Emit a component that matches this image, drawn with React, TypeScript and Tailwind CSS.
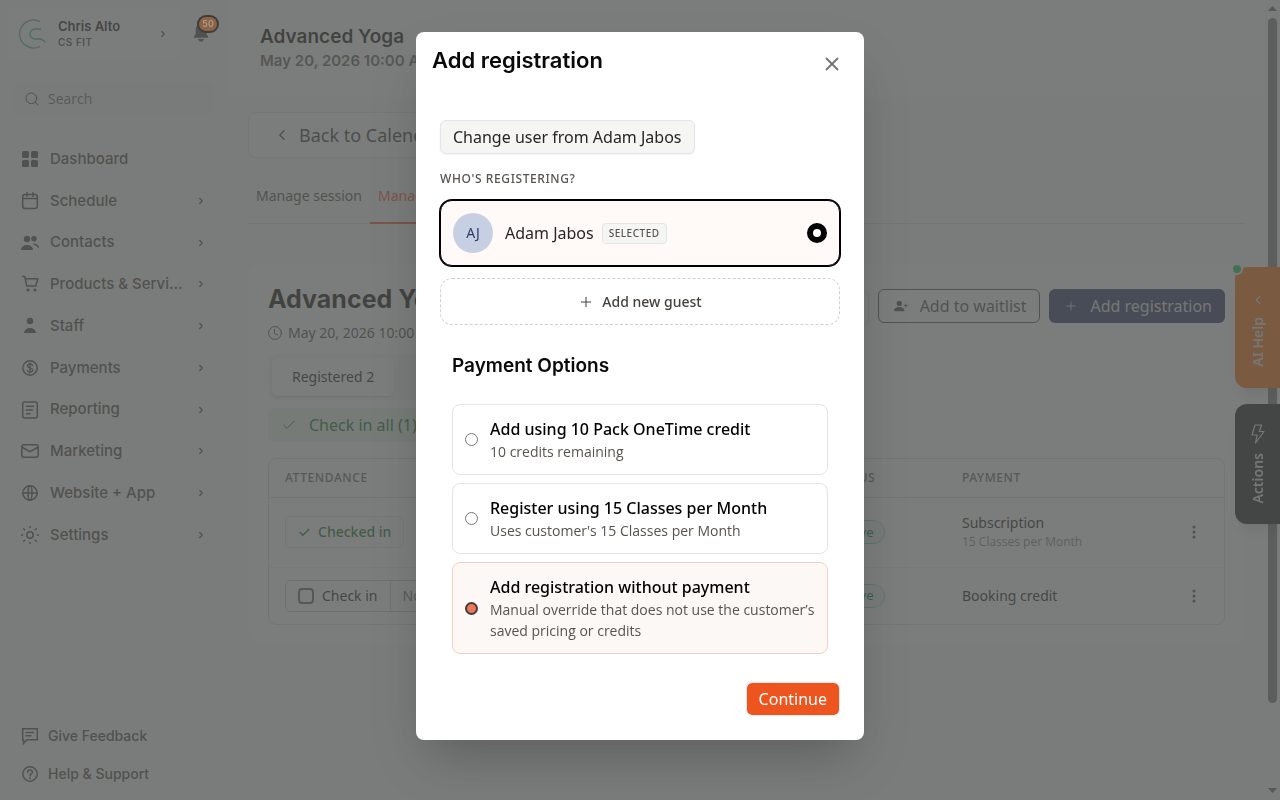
import React, { useState } from 'react';
import { Check, ChevronLeft, ChevronRight, Plus, Search, X } from 'lucide-react';
import { BsPersonPlusFill, BsThreeDotsVertical } from 'react-icons/bs';

const NAV_ICONS: Record<string, React.ReactNode> = {
  dashboard: (
    <g fill="currentColor" stroke="none">
      <rect x="1" y="1" width="7" height="7" rx="1.5" />
      <rect x="10" y="1" width="7" height="7" rx="1.5" />
      <rect x="1" y="10" width="7" height="7" rx="1.5" />
      <rect x="10" y="10" width="7" height="7" rx="1.5" />
    </g>
  ),
  schedule: (
    <>
      <rect x="1.7" y="2.5" width="14.6" height="14" rx="2.5" />
      <path d="M2 6.5h14M6 .8v3.4M12 .8v3.4" />
    </>
  ),
  contacts: (
    <>
      <g fill="currentColor" stroke="none">
        <circle cx="6" cy="5" r="3.2" />
        <circle cx="13" cy="4.8" r="2.7" />
        <path d="M0 16c0-3 2.600-5 6-5s6 2 6 5z" />
      </g>
      <path d="M13.200 10.300c2 .5 3.400 1.400 4.300 2.800" />
    </>
  ),
  products: (
    <>
      <path d="M1.500 1.500h2.300l2 9.500h9L16.700 3.700H4.500" />
      <circle cx="7" cy="15" r="1.600" fill="currentColor" stroke="none" />
      <circle cx="14" cy="15" r="1.600" fill="currentColor" stroke="none" />
    </>
  ),
  staff: (
    <g fill="currentColor" stroke="none">
      <circle cx="9" cy="4" r="3.200" />
      <path d="M3 16c.3-3 2.600-5 6-5s5.700 2 6 5z" />
    </g>
  ),
  payments: (
    <>
      <circle cx="9" cy="9" r="7.200" />
      <path d="M11.500 6.500c-.4-1-1.300-1.500-2.500-1.500-1.500 0-2.500.8-2.500 2 0 2.700 5.200 1.400 5.200 4 0 1.200-1.100 2-2.700 2-1.400 0-2.400-.6-2.700-1.700M9 3.800v10.400" strokeWidth="1.300" />
    </>
  ),
  reporting: (
    <>
      <rect x="1.700" y="1" width="14.600" height="16" rx="2" />
      <path d="M5.500 5.200h7M5.500 9h6M5.500 12.800h3.500" />
    </>
  ),
  marketing: (
    <>
      <rect x=".8" y="2.800" width="16.400" height="12.400" rx="2.200" />
      <path d="M1.500 5.500L9 9.700l7.500-4.200" />
    </>
  ),
  website: (
    <>
      <circle cx="9" cy="9" r="7.200" />
      <ellipse cx="9" cy="9" rx="2" ry="7.200" />
      <path d="M1.800 9h14.400" />
    </>
  ),
  settings: (
    <>
      <circle cx="9" cy="9" r="3.200" />
      <path d="M9 0v1.500M9 16.500v1.500M0 9h1.500M16.500 9h1.500M2.700 2.700l1 1M14.300 14.300l1 1M2.700 15.300l1-1M14.300 3.700l1-1" />
    </>
  ),
  feedback: (
    <path d="M1.700 1.700h14.600v11H6L2.500 16.500v-3.800h-.8zM5 5.500h7.500M5 8.800h5" strokeLinejoin="miter" />
  ),
  help: (
    <>
      <circle cx="9" cy="9" r="7.200" />
      <path d="M6.700 7.300c0-1.300 1-2.200 2.300-2.200s2.300.9 2.300 2.100c0 1.600-2.300 1.800-2.300 3.600" />
      <circle cx="9" cy="13" r=".9" fill="currentColor" stroke="none" />
    </>
  ),
};

const NavIcon = ({ name }: { name: string }) => (
  <svg width="18" height="18" viewBox="0 0 18 18" fill="none" stroke="currentColor" strokeWidth="1.500" strokeLinecap="round" strokeLinejoin="round" className="shrink-0" aria-hidden="true">
    {NAV_ICONS[name]}
  </svg>
);

const NAV_ITEMS = [
  { icon: 'dashboard', label: 'Dashboard' },
  { icon: 'schedule', label: 'Schedule', children: true },
  { icon: 'contacts', label: 'Contacts', children: true },
  { icon: 'products', label: 'Products & Servi…', children: true },
  { icon: 'staff', label: 'Staff', children: true },
  { icon: 'payments', label: 'Payments', children: true },
  { icon: 'reporting', label: 'Reporting', children: true },
  { icon: 'marketing', label: 'Marketing', children: true },
  { icon: 'website', label: 'Website + App', children: true },
  { icon: 'settings', label: 'Settings', children: true },
];

const PAYMENT_OPTIONS = [
  { id: 'pack', title: 'Add using 10 Pack OneTime credit', detail: '10 credits remaining' },
  { id: 'subscription', title: 'Register using 15 Classes per Month', detail: "Uses customer's 15 Classes per Month" },
  { id: 'none', title: 'Add registration without payment', detail: 'Manual override that does not use the customer’s saved pricing or credits' },
];

const Sidebar = () => (
  <aside className="w-[228px] shrink-0 flex flex-col bg-[#fbfbfb] text-[#57504d] font-['Inter',sans-serif]">
    <div className="flex items-start pl-2 pt-2">
      <button className="flex items-center w-[172px] h-[52px] pl-[11px] pr-3 rounded-lg bg-white text-left">
        <svg width="28" height="30" viewBox="0 0 28 30" fill="none" stroke="#4fb5a8" strokeWidth="1.300" aria-hidden="true">
          <path d="M21 2.500A14 14 0 1 0 21 27.500" />
          <path d="M22 10h-6a5 5 0 0 0 0 10h6l4.500 3" />
        </svg>
        <span className="flex-1 ml-[11px]">
          <span className="block text-[13px] leading-4 font-semibold text-[#292524]">Chris Alto</span>
          <span className="block text-[10px] leading-4 font-semibold tracking-wider">CS FIT</span>
        </span>
        <ChevronRight size={10} strokeWidth={3} />
      </button>
      <button className="relative ml-[13px] mt-[15px]" aria-label="Notifications">
        <svg width="16" height="20" viewBox="0 0 16 20" fill="currentColor" aria-hidden="true">
          <path d="M8 1C4.500 1 2.700 3.500 2.700 6.500v4.300L1 13.500v1.200h14v-1.200l-1.700-2.700V6.500C13.300 3.500 11.500 1 8 1z" />
          <path d="M5 16h6c-.4 1.700-1.500 2.600-3 2.600S5.400 17.700 5 16z" />
        </svg>
        <span className="absolute z-30 left-1 -top-2 flex items-center justify-center w-[22px] h-[18px] rounded-full border-2 border-[#3c3e3d] bg-[#8e6243] text-[9px] font-medium text-[#a9a5a2]">50</span>
      </button>
    </div>

    <label className="flex items-center gap-2 mt-[22px] mx-[14px] h-[34px] px-[10px] rounded-lg bg-[#f6f6f6]">
      <Search size={16} strokeWidth={1.5} className="shrink-0" />
      <input type="text" placeholder="Search" aria-label="Search" className="w-full bg-transparent font-['Open_Sans',sans-serif] text-sm outline-none placeholder:text-[#78716c]" />
    </label>

    <nav className="flex flex-col justify-between h-[412px] mt-[25px] pl-[21px] pr-[22px]">
      {NAV_ITEMS.map((item) => (
        <a key={item.icon} href="#" className="flex items-center h-9 gap-[11px] text-[15px] font-medium whitespace-nowrap">
          <NavIcon name={item.icon} />
          <span className="flex-1">{item.label}</span>
          {item.children && <ChevronRight size={10} strokeWidth={3} />}
        </a>
      ))}
    </nav>

    <div className="mt-auto pl-[21px] pb-[7px]">
      <a href="#" className="flex items-center h-[38px] gap-[9px] text-sm font-medium">
        <NavIcon name="feedback" />
        Give Feedback
      </a>
      <a href="#" className="flex items-center h-[38px] gap-[9px] text-sm font-medium">
        <NavIcon name="help" />
        Help &amp; Support
      </a>
    </div>
  </aside>
);

const StatusPill = () => (
  <span className="inline-flex items-center h-6 px-[10px] rounded-full border border-[#8fd6bf] bg-[#effaf6] text-[13px] text-[#0f766e]">Active</span>
);

const AttendanceTable = () => (
  <div className="mt-4 rounded-lg border border-[#dddddd]">
    <table className="w-full table-fixed text-left text-sm">
      <colgroup>
        <col className="w-[260px]" />
        <col />
        <col className="w-[136px]" />
        <col className="w-[220px]" />
        <col className="w-[58px]" />
      </colgroup>
      <thead>
        <tr className="h-[38px] border-b border-[#dddddd] text-xs text-[#6b6b6b] tracking-wider">
          <th className="px-4 font-medium">ATTENDANCE</th>
          <th />
          <th className="px-5 font-medium">STATUS</th>
          <th className="px-4 font-medium">PAYMENT</th>
          <th />
        </tr>
      </thead>
      <tbody>
        <tr className="h-[70px] border-b border-[#eeeeee]">
          <td className="px-4">
            <button className="flex items-center gap-[7px] h-8 px-3 rounded-md border border-[#d4e2d8] text-[#1f7a33] font-medium">
              <Check size={13} strokeWidth={2.5} />
              Checked in
            </button>
          </td>
          <td />
          <td className="px-4"><StatusPill /></td>
          <td className="px-4">
            <div className="leading-5 text-[#292524]">Subscription</div>
            <div className="font-['Open_Sans',sans-serif] text-xs leading-[18px] text-[#8a8a8a]">15 Classes per Month</div>
          </td>
          <td className="px-4">
            <button className="block ml-1 text-[#57534e]" aria-label="Row menu"><BsThreeDotsVertical size={16} /></button>
          </td>
        </tr>
        <tr className="h-[57px]">
          <td className="px-4">
            <div className="inline-flex items-center h-8 rounded-md border border-[#cfcfcf]">
              <label className="flex items-center gap-2 h-full px-3 border-r border-[#cfcfcf] text-[#292524]">
                <input type="checkbox" className="appearance-none w-4 h-4 rounded border-2 border-[#6b6b6b]" />
                Check in
              </label>
              <button className="px-3 text-[#78716c]">No show</button>
            </div>
          </td>
          <td />
          <td className="px-4"><StatusPill /></td>
          <td className="px-4 text-[#292524]">Booking credit</td>
          <td className="px-4">
            <button className="block ml-1 text-[#57534e]" aria-label="Row menu"><BsThreeDotsVertical size={16} /></button>
          </td>
        </tr>
      </tbody>
    </table>
  </div>
);

const SessionPage = () => (
  <main className="flex-1 min-w-0 bg-[#f9f9f9] text-[#57534e]">
    <header className="h-[97px] px-8 pt-6 bg-white font-['Inter',sans-serif] font-semibold">
      <h1 className="text-[19px] leading-[26px] text-[#1c1917]">Advanced Yoga</h1>
      <p className="text-[15px] leading-[22px] text-[#6b6663]">May 20, 2026 10:00 AM</p>
    </header>

    <div className="px-5 pt-[15px]">
      <button className="flex items-center gap-2 h-[46px] pl-6 pr-6 rounded-lg border border-[#e7e5e4] bg-white text-lg text-[#44403c]">
        <ChevronLeft size={18} strokeWidth={1.5} />
        Back to Calendar
      </button>

      <div className="flex h-[50px] mt-4 border-b border-[#dddddd] text-sm">
        <a href="#" className="px-2 pt-3 h-[50px]">Manage session</a>
        <a href="#" className="px-2 pt-3 h-[50px] border-b-2 border-[#ff5a3c] text-[#ff5a3c]">Manage attendees</a>
      </div>

      <section className="mt-10 p-5 rounded-2xl bg-white">
        <div className="flex justify-between">
          <div>
            <h2 className="font-['Inter',sans-serif] text-[25px] leading-[30px] font-bold text-[#1c1917]">Advanced Yoga</h2>
            <p className="flex items-center gap-[6px] mt-2 text-sm leading-[22px]">
              <svg width="14" height="14" viewBox="0 0 14 14" fill="none" stroke="currentColor" strokeWidth="1" strokeLinecap="round" aria-hidden="true">
                <circle cx="7" cy="7" r="6.400" />
                <path d="M6.500 3.500v4l3 1.500" />
              </svg>
              May 20, 2026 10:00 AM
            </p>
          </div>
          <div className="flex items-start gap-[9px] pt-[5px]">
            <button className="h-[38px] px-3 rounded-lg border border-[#dddddd] text-base">Message</button>
            <button className="flex items-center gap-3 h-[34px] pl-[15px] pr-[13px] rounded-md border border-[#57534e] text-base">
              <BsPersonPlusFill size={14} />
              Add to waitlist
            </button>
            <button className="flex items-center gap-3 h-[34px] pl-[15px] pr-[13px] rounded-md bg-[#303c68] text-base text-[#e5e5e5]">
              <Plus size={14} strokeWidth={1.5} />
              Add registration
            </button>
          </div>
        </div>

        <div className="flex w-80 h-[46px] mt-[10px] p-1 rounded-lg bg-[#f5f5f5] text-sm">
          <button className="px-5 rounded-md bg-white text-[#292524] shadow-sm">Registered 2</button>
        </div>

        <button className="flex items-center gap-3 h-[34px] mt-2 pl-[13px] pr-3 rounded-md bg-[#e9f5ee] text-base text-[#1f7a33]">
          <Check size={16} strokeWidth={1.5} />
          Check in all (1)
        </button>

        <AttendanceTable />
      </section>
    </div>
  </main>
);

const ScrollRail = () => (
  <div className="w-[15px] shrink-0 flex flex-col items-center bg-[#f9f9f9] text-[#6b6b6b]" aria-hidden="true">
    <svg width="9" height="5" viewBox="0 0 9 5" fill="currentColor" className="mt-[6px]"><path d="M0 5L4.500 0 9 5z" /></svg>
    <div className="w-[9px] basis-[685px] shrink mt-[7px] rounded-full bg-[#828282]" />
    <svg width="9" height="5" viewBox="0 0 9 5" fill="currentColor" className="mt-auto mb-[7px]"><path d="M0 0l4.500 5L9 0z" /></svg>
  </div>
);

const SideTabs = () => (
  <div className="fixed right-0 top-[267px] flex flex-col gap-4 text-sm font-semibold text-[#e7e5e4]">
    <button className="relative flex flex-col items-center justify-center gap-[10px] w-[45px] h-[121px] pt-1 rounded-l-xl bg-[#f97316] shadow-lg">
      <ChevronLeft size={14} strokeWidth={2} />
      <span className="[writing-mode:vertical-rl] rotate-180">AI Help</span>
      <span className="absolute -left-1 -top-1 w-3 h-3 rounded-full border-2 border-white bg-[#22c55e]" />
    </button>
    <button className="flex flex-col items-center justify-center gap-[9px] w-[45px] h-[120px] rounded-l-xl bg-[#262626] shadow-lg">
      <svg width="14" height="20" viewBox="0 0 14 20" fill="none" stroke="currentColor" strokeWidth="1.200" strokeLinejoin="round" aria-hidden="true">
        <path d="M4 1h6.500L8.300 7.500H13L4.500 19l1.600-8H1z" />
      </svg>
      <span className="[writing-mode:vertical-rl] rotate-180">Actions</span>
    </button>
  </div>
);

const RegistrationModal = () => {
  const [payment, setPayment] = useState('none');

  return (
    <div className="fixed inset-0 z-20 flex items-start justify-center pt-8 bg-[#4f5250]/75">
      <div role="dialog" aria-labelledby="modal-title" className="w-full max-w-md rounded-lg bg-white shadow-2xl text-[#292524]">
        <div className="flex justify-between h-16 px-4 pt-[14px]">
          <h2 id="modal-title" className="font-['Inter',sans-serif] text-[22px] leading-7 font-semibold text-[#0c0a09]">Add registration</h2>
          <button aria-label="Close" className="w-8 h-9 flex items-center justify-center text-[#78716c]">
            <X size={22} strokeWidth={2} />
          </button>
        </div>

        <div className="p-6">
          <button className="h-[34px] px-3 rounded-md border border-[#e5e5e5] bg-[#f5f5f4] text-base leading-6 shadow-xs">Change user from Adam Jabos</button>

          <h3 className="mt-[17px] text-xs leading-4 font-medium tracking-wider text-[#57534e]">WHO'S REGISTERING?</h3>

          <label className="flex items-center h-[66px] mt-[13px] px-3 rounded-xl border border-black ring-1 ring-black bg-[#fff9f8]">
            <span className="flex items-center justify-center w-10 h-10 rounded-full bg-[#c7d0e2] text-sm text-[#303c68]">AJ</span>
            <span className="ml-3 text-base">Adam Jabos</span>
            <span className="ml-2 px-[6px] rounded border border-[#e5e5e5] bg-[#f5f5f4] text-[10px] leading-[19px] font-medium tracking-wider text-[#57534e]">SELECTED</span>
            <input type="radio" name="registrant" defaultChecked className="appearance-none ml-auto w-5 h-5 rounded-full border-[6px] border-black bg-white" />
          </label>

          <button className="flex items-center justify-center gap-2 w-full h-[47px] mt-3 rounded-xl border border-dashed border-[#d0d0d0] text-sm font-medium text-[#44403c]">
            <Plus size={16} strokeWidth={1.5} />
            Add new guest
          </button>

          <div className="px-3 pt-7">
            <h3 className="font-['Inter',sans-serif] text-[19px] leading-[26px] font-semibold text-[#0c0a09]">Payment Options</h3>
            <div className="flex flex-col gap-2 mt-[25px]">
              {PAYMENT_OPTIONS.map((option) => {
                const selected = payment === option.id;
                return (
                  <label key={option.id} className={`flex items-center gap-3 py-3 pl-3 pr-2 rounded-lg border ${selected ? 'border-[#f8cfc6] bg-[#fcf8f5]' : 'border-[#e5e5e5] bg-white'}`}>
                    <input
                      type="radio"
                      name="payment"
                      checked={selected}
                      onChange={() => setPayment(option.id)}
                      className={`appearance-none shrink-0 w-[13px] h-[13px] rounded-full ${selected ? 'border-2 border-[#4a3a38] bg-[#e9795d]' : 'border border-[#767676] bg-white'}`}
                    />
                    <span>
                      <span className="block text-base leading-6 font-medium text-black">{option.title}</span>
                      <span className="block font-['Open_Sans',sans-serif] text-sm leading-[21px] text-[#57534e]">{option.detail}</span>
                    </span>
                  </label>
                );
              })}
            </div>
          </div>

          <div className="flex justify-end mt-7">
            <button className="h-[34px] px-3 rounded-md border border-[#e5e7eb] bg-[#ee541e] bg-clip-padding text-base leading-6 text-white">Continue</button>
          </div>
        </div>
      </div>
    </div>
  );
};

function App() {
  return (
    <div className="flex min-h-screen font-['Noto_Sans',sans-serif]">
      <Sidebar />
      <SessionPage />
      <ScrollRail />
      <SideTabs />
      <RegistrationModal />
    </div>
  );
}

export default App;
